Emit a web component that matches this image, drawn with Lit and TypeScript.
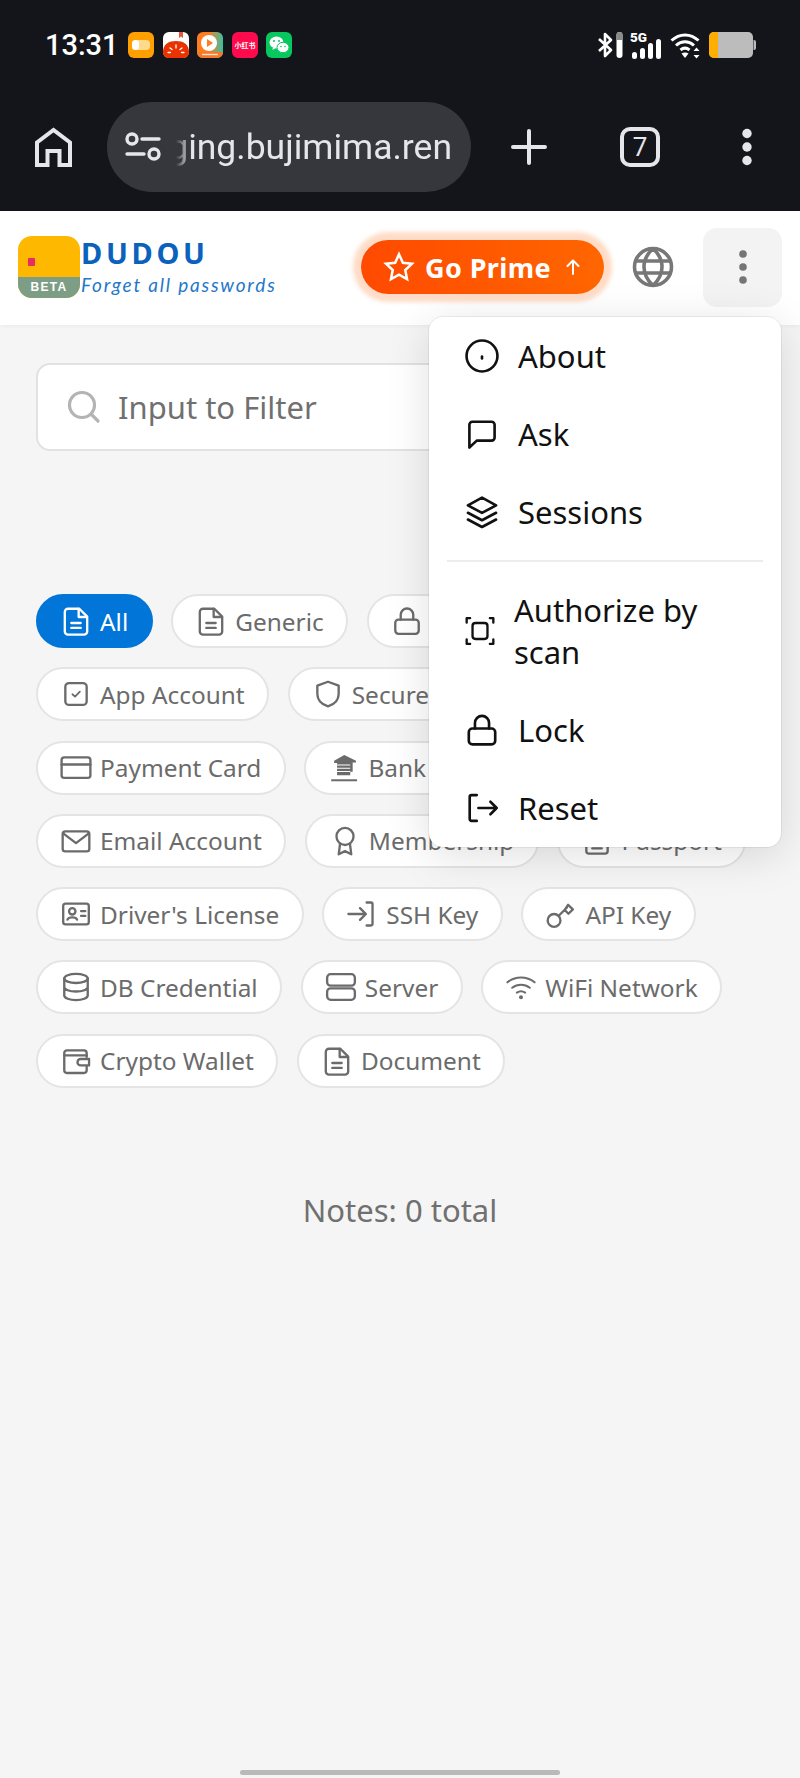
import { LitElement, html, css, svg } from 'lit';
import { customElement } from 'lit/decorators.js';

const stroke = (body: unknown, cls = 'ic') => html`<svg class=${cls} viewBox="0 0 24 24" fill="none" stroke="currentColor" stroke-width="1.75" stroke-linecap="round" stroke-linejoin="round">${body}</svg>`;

const icons: Record<string, unknown> = {
  doc: svg`<path d="M14.5 2.8H6a2.4 2.4 0 0 0-2.4 2.4v14.6A2.4 2.4 0 0 0 6 22.200h12a2.400 2.400 0 0 0 2.400-2.400V8.700z"/><path d="M14 3v6h6"/><path d="M8.500 13.500h7M8.500 17.200h7"/>`,
  lock: svg`<rect x="3.200" y="11" width="17.600" height="10.600" rx="2.400"/><path d="M7.300 11V7.300a4.700 4.700 0 0 1 9.400 0V11"/>`,
  app: svg`<rect x="4" y="3.800" width="16" height="16.400" rx="2.800"/><path stroke-width="1.300" d="M9.300 12.200l2 1.800 3.600-3.800"/>`,
  shield: svg`<path d="M12 2.800l8 2.900v6.100c0 4.700-3.300 8-8 9.400-4.700-1.400-8-4.700-8-9.400V5.700z"/>`,
  card: svg`<rect x="1.200" y="4" width="21.600" height="15.400" rx="2"/><path d="M1.200 9.400h21.600"/>`,
  bank: svg`<path fill="currentColor" stroke="none" d="M12.200 2.200L21 6.600v1.300h-2.500v7h-1.800v2.600H6.800V8.200H4.600V6.600z"/><path stroke="#fff" stroke-width="0.800" stroke-linecap="butt" d="M6.800 9.800h9.900M6.800 12.200h9.900M6.800 14.600h9.900"/><path stroke-width="1.500" stroke-linecap="butt" d="M2.400 21.200h19.400"/>`,
  mail: svg`<rect x="2" y="4.800" width="20" height="15" rx="2"/><path d="M2.400 6.300L12 13.600l9.600-7.300"/>`,
  award: svg`<circle cx="12" cy="8.600" r="6.400"/><path d="M8.300 14l-1 8 4.700-2.400 4.700 2.400-1-8"/>`,
  passport: svg`<rect x="4" y="2.500" width="16" height="19" rx="2"/><path d="M8.500 17.500h7"/>`,
  id: svg`<rect x="2.400" y="4.200" width="19.200" height="15.600" rx="1.800"/><circle cx="9.200" cy="10" r="2.400"/><path d="M5.600 16.200c.8-2.200 6.400-2.200 7.200 0M15.800 9.800h3.200M15.800 13.400h3.200"/>`,
  login: svg`<path d="M15.500 3.400h3.200a1.200 1.200 0 0 1 1.200 1.200v14.800a1.200 1.200 0 0 1-1.200 1.200h-3.200"/><path d="M1.800 12h13M10.500 7.600l4.400 4.400-4.400 4.400"/>`,
  key: svg`<circle cx="6.800" cy="16.800" r="4.800"/><path d="M10.300 13.300l6.200-6.200M14.800 9l2.800 2.800 3.300-3.300-3.600-3.400z"/>`,
  db: svg`<ellipse cx="12" cy="5.600" rx="8.800" ry="3.400"/><path d="M3.200 5.600v12.800c0 1.900 3.900 3.400 8.800 3.400s8.800-1.500 8.800-3.400V5.600M3.200 12c0 1.900 3.900 3.400 8.800 3.400s8.800-1.500 8.800-3.400"/>`,
  server: svg`<rect x="1.600" y="2.400" width="20.800" height="8.600" rx="2.600"/><rect x="1.600" y="13" width="20.800" height="8.600" rx="2.600"/>`,
  wifi: svg`<path stroke-width="1.500" d="M1.800 8.500c6-4.800 14.400-4.800 20.400 0M5.400 12.600c3.900-3 9.300-3 13.200 0M8.900 16.200c1.900-1.300 4.300-1.300 6.200 0"/><circle cx="12" cy="19.600" r="1.500" fill="currentColor" stroke="none"/>`,
  wallet: svg`<path d="M20 9V6a2 2 0 0 0-2-2H5.200a2 2 0 0 0-2 2v13a2 2 0 0 0 2 2H18a2 2 0 0 0 2-2v-3"/><path d="M3.400 7.800H20"/><path d="M15.500 10.500h6.300v4.800h-6.300a2.400 2.400 0 0 1 0-4.800z"/>`,
  info: svg`<circle cx="12" cy="12" r="10.300"/><path d="M12 12.300v1.300"/>`,
  chat: svg`<path d="M3.600 21V5.800a2 2 0 0 1 2-2h12.800a2 2 0 0 1 2 2v8.600a2 2 0 0 1-2 2H8.500z"/>`,
  layers: svg`<path d="M12 2.400L2.600 7.600l9.400 5 9.400-5z"/><path d="M2.600 12.500l9.400 5 9.400-5M2.600 17l9.400 5 9.400-5"/>`,
  scan: svg`<path d="M2 5.600V2.400h2.600M19.400 2.400H22v3.200M22 18.400v3.200h-2.600M4.600 21.600H2v-3.200"/><rect x="6.400" y="6" width="11.200" height="12" rx="2.200"/>`,
  reset: svg`<path d="M8.500 3.400H5a1.200 1.200 0 0 0-1.200 1.200v14.800A1.200 1.200 0 0 0 5 20.600h3.500"/><path d="M9.600 12h12.200M17.600 7.800l4.200 4.200-4.200 4.200"/>`,
};

const CHIPS = [
  { label: 'All', icon: 'doc', active: true },
  { label: 'Generic', icon: 'doc' },
  { label: 'Password', icon: 'lock' },
  { label: 'App Account', icon: 'app' },
  { label: 'Secure Note', icon: 'shield' },
  { label: 'Payment Card', icon: 'card' },
  { label: 'Bank Account', icon: 'bank' },
  { label: 'Email Account', icon: 'mail' },
  { label: 'Membership', icon: 'award' },
  { label: 'Passport', icon: 'passport' },
  { label: "Driver's License", icon: 'id' },
  { label: 'SSH Key', icon: 'login' },
  { label: 'API Key', icon: 'key' },
  { label: 'DB Credential', icon: 'db' },
  { label: 'Server', icon: 'server' },
  { label: 'WiFi Network', icon: 'wifi' },
  { label: 'Crypto Wallet', icon: 'wallet' },
  { label: 'Document', icon: 'doc' },
];

// notification icons in the status bar
const batteryApp = html`<svg class="app" viewBox="0 0 26 26"><rect width="26" height="26" rx="6" fill="#ff9f00"/><rect x="4" y="8" width="18" height="10" rx="4" fill="#ffd98c"/><rect x="4" y="8" width="7" height="10" rx="3.500" fill="#fff"/></svg>`;
const tomatoApp = html`<svg class="app" viewBox="0 0 26 26"><rect width="26" height="26" rx="6" fill="#fff"/><path d="M0 20C0 12 6 9 13 9s13 3 13 11c0 3.500-2.500 6-6 6H6c-3.500 0-6-2.500-6-6z" fill="#e93200"/><path d="M16 0h4v6l-2-1.500L16 6z" fill="#e8553c"/><path d="M13 13v3M7 16l2 1.500M19 16l-2 1.500M5 20.500h2.500M18.500 20.500H21" stroke="#fff" stroke-width="1.300" stroke-linecap="round"/></svg>`;
const videoApp = html`<svg class="app" viewBox="0 0 26 26"><defs><linearGradient id="va" x1="0" y1="0" x2="1" y2="0"><stop offset="0.450" stop-color="#ff7d1f"/><stop offset="1" stop-color="#36c2a4"/></linearGradient></defs><rect width="26" height="26" rx="6" fill="url(#va)"/><path d="M0 20h26v0c0 3.500-2.500 6-6 6H6c-3.500 0-6-2.500-6-6z" fill="#f4792e"/><circle cx="12" cy="11" r="8" fill="#fff"/><path d="M10 7l6 4-6 4z" fill="#ff7d1f"/><path d="M5 22.500h16" stroke="#ffe2c4" stroke-width="1.400"/></svg>`;
const redApp = html`<svg class="app" viewBox="0 0 26 26"><rect width="26" height="26" rx="6" fill="#ff0a4c"/><text x="13" y="16" text-anchor="middle" font-size="7" font-weight="700" fill="#fff" font-family="'Noto Sans CJK SC', sans-serif">小红书</text></svg>`;
const chatApp = html`<svg class="app" viewBox="0 0 26 26"><rect width="26" height="26" rx="6" fill="#07c75f"/><ellipse cx="10.500" cy="10.500" rx="7" ry="6" fill="#fff"/><path d="M7 15l-.6 3 3-1.800z" fill="#fff"/><ellipse cx="17" cy="15.500" rx="6" ry="5.200" fill="#fff" stroke="#07c75f" stroke-width="1"/><circle cx="8" cy="9" r="1" fill="#07c75f"/><circle cx="13" cy="9" r="1" fill="#07c75f"/><circle cx="15" cy="14.500" r=".8" fill="#07c75f"/><circle cx="19" cy="14.500" r=".8" fill="#07c75f"/></svg>`;

@customElement('app-root')
export class AppRoot extends LitElement {
  static styles = css`
    :host {
      display: flex;
      flex-direction: column;
      min-height: 1778px;
      background: #f5f5f5;
      font-family: 'Noto Sans', sans-serif;
      position: relative;
    }

    .top {
      background: #14151a;
      height: 211px;
      color: #e6e6ea;
      font-family: Roboto, sans-serif;
    }

    .status {
      height: 89px;
      display: flex;
      align-items: center;
      padding: 0 44px 0 45px;
      box-sizing: border-box;
    }
    .time {
      color: #fff;
      font-size: 29px;
      font-weight: 500;
      width: 83px;
    }
    .apps {
      display: flex;
      gap: 8.5px;
    }
    .app {
      width: 26px;
      height: 26px;
      display: block;
    }
    .sys {
      margin-left: auto;
      display: flex;
      align-items: center;
    }
    .sys svg {
      display: block;
      height: 28px;
      overflow: visible;
    }

    .toolbar {
      display: flex;
      align-items: center;
      padding: 13px 0 0 35px;
    }
    .toolbar svg {
      display: block;
      flex: none;
    }
    .home {
      width: 37px;
      height: 40px;
      margin-right: 35px;
    }
    .pill {
      width: 364px;
      height: 90px;
      flex: none;
      border-radius: 45px;
      background: #36373c;
      display: flex;
      align-items: center;
      box-sizing: border-box;
      padding: 0 19px 0 18px;
    }
    .tune {
      width: 36px;
      height: 30px;
      flex: none;
      display: block;
    }
    .url {
      margin-left: auto;
      font-size: 35.500px;
      white-space: nowrap;
      -webkit-mask-image: linear-gradient(90deg, transparent 8px, rgba(0, 0, 0, 0.5) 15px, #000 24px);
      mask-image: linear-gradient(90deg, transparent 8px, rgba(0, 0, 0, 0.5) 15px, #000 24px);
    }
    .plus {
      width: 36px;
      height: 36px;
      margin-left: 40px;
    }
    .tabs {
      width: 32px;
      height: 32px;
      margin-left: 73px;
      border: 4px solid #e6e6ea;
      border-radius: 10px;
      display: flex;
      align-items: center;
      justify-content: center;
      font-size: 26px;
      flex: none;
    }
    .dots {
      width: 20px;
      height: 40px;
      margin-left: 77px;
    }

    header {
      height: 114px;
      box-sizing: border-box;
      background: #fff;
      display: flex;
      align-items: center;
      padding: 0 18px 2px;
      box-shadow: 0 1px 4px rgba(0, 0, 0, 0.05);
    }
    .logo {
      width: 62px;
      height: 62px;
      border-radius: 14px;
      overflow: hidden;
      background: #ffb800;
      display: flex;
      flex-direction: column;
      flex: none;
    }
    .logo-top {
      flex: 1;
      display: flex;
      align-items: flex-end;
      padding: 0 0 11px 10px;
    }
    .logo-dot {
      width: 7px;
      height: 8px;
      background: #ea2a63;
      border-radius: 1px;
    }
    .beta {
      height: 21px;
      background: #7d9e84;
      color: #fff;
      font-family: 'Liberation Sans', sans-serif;
      font-size: 12px;
      font-weight: 700;
      letter-spacing: 1.300px;
      line-height: 21px;
      text-align: center;
    }
    .brand {
      margin-left: 1px;
      display: flex;
      flex-direction: column;
    }
    .brand b {
      color: #0b62bd;
      font-size: 29px;
      line-height: 32px;
      letter-spacing: 3.700px;
      margin-bottom: 4px;
    }
    .brand i {
      color: #1f78c9;
      font-family: Lato, sans-serif;
      font-style: italic;
      font-size: 19px;
      line-height: 24px;
      letter-spacing: 1.800px;
      white-space: nowrap;
    }
    .prime {
      margin-left: auto;
      width: 243px;
      height: 54px;
      border-radius: 27px;
      background: linear-gradient(90deg, #ff4a00, #ff6600);
      box-shadow: 0 0 4px 8px rgba(255, 110, 20, 0.24);
      color: #fff;
      display: flex;
      align-items: center;
      box-sizing: border-box;
      padding-left: 22px;
      font-size: 27px;
      font-weight: 700;
      letter-spacing: 0.400px;
    }
    .prime svg {
      flex: none;
      display: block;
    }
    .star {
      width: 32px;
      height: 32px;
      margin-right: 10px;
    }
    .up {
      width: 18px;
      height: 18px;
      margin-left: 13px;
    }
    .globe {
      width: 42px;
      height: 42px;
      margin-left: 28px;
      color: #777;
      flex: none;
    }
    .more {
      width: 79px;
      height: 79px;
      margin-left: 29px;
      border-radius: 14px;
      background: #f3f3f3;
      display: flex;
      align-items: center;
      justify-content: center;
      flex: none;
    }
    .more svg {
      width: 10px;
      height: 34px;
      display: block;
    }

    main {
      flex: 1;
      padding: 38px 36px 0;
    }
    .search {
      height: 88px;
      box-sizing: border-box;
      border: 2px solid #e2e2e2;
      border-radius: 14px;
      background: #fff;
      display: flex;
      align-items: center;
      padding-left: 29px;
      font-size: 31px;
      color: #707070;
    }
    .search svg {
      width: 34px;
      height: 34px;
      margin-right: 17px;
      color: #b4b4b4;
      flex: none;
    }
    .chips {
      margin-top: 143px;
      display: flex;
      flex-wrap: wrap;
      gap: 19.300px 18.600px;
    }
    .chip {
      height: 54px;
      box-sizing: border-box;
      display: flex;
      align-items: center;
      gap: 8px;
      padding: 0 22.500px 0 22px;
      border: 2px solid #e4e4e4;
      border-radius: 27px;
      background: #fff;
      color: #6b6b6b;
      font-size: 24.400px;
      white-space: nowrap;
    }
    .chip.active {
      background: #0275d8;
      border-color: #0275d8;
      color: #fff;
    }
    .ic {
      width: 32px;
      height: 32px;
      flex: none;
      display: block;
    }
    .total {
      margin-top: 102px;
      text-align: center;
      font-size: 31px;
      line-height: 41px;
      color: #707070;
    }

    .menu {
      position: absolute;
      left: 429px;
      top: 317px;
      width: 352px;
      box-sizing: border-box;
      background: #fff;
      border-radius: 14px;
      box-shadow: 0 0 0 1px rgba(0, 0, 0, 0.06), 0 8px 44px rgba(0, 0, 0, 0.13);
      color: #111;
      font-size: 31px;
      line-height: 42px;
    }
    .item {
      display: flex;
      align-items: center;
      gap: 18px;
      padding: 18px 40px 18px 35px;
    }
    .item .ic {
      width: 36px;
      height: 36px;
    }
    .item.narrow .ic {
      width: 32px;
      height: 32px;
    }
    .menu hr {
      border: 0;
      height: 2px;
      margin: 9px 18px;
      background: #ececec;
    }

    .gesture {
      height: 8px;
      display: flex;
      justify-content: center;
    }
    .gesture span {
      width: 320px;
      height: 5px;
      border-radius: 3px;
      background: #b9b9b9;
    }
  `;

  render() {
    return html`
      <div class="top">
        <div class="status">
          <div class="time">13:31</div>
          <div class="apps">${batteryApp}${tomatoApp}${videoApp}${redApp}${chatApp}</div>
          <div class="sys">
            <svg viewBox="0 0 26 28" style="width:26px">
              <path d="M2 8l12 11-6 6V3l6 6L2 20" fill="none" stroke="#fff" stroke-width="2.600" stroke-linejoin="round"/>
              <rect x="19.500" y="1" width="6" height="26" rx="3" fill="#fff"/>
              <path d="M19.500 9V4a3 3 0 0 1 6 0v5z" fill="#8a8a8a"/>
            </svg>
            <svg viewBox="0 0 33 28" style="width:33px;margin-left:7px">
              <text x="0" y="10.500" font-size="13.500" font-weight="900" fill="#fff" font-family="Roboto, sans-serif">5G</text>
              <rect x="2" y="21" width="5" height="7" rx="2.500" fill="#fff"/>
              <rect x="10" y="17" width="5" height="11" rx="2.500" fill="#fff"/>
              <rect x="18" y="12" width="5" height="16" rx="2.500" fill="#fff"/>
              <rect x="26" y="8" width="5" height="20" rx="2.500" fill="#fff"/>
            </svg>
            <svg viewBox="0 0 33 28" style="width:33px;margin-left:7px">
              <path d="M1.500 9.500c8-7.500 19-7.500 27 0M6 14.500c5.500-5 12.500-5 18 0M10.500 19c3-2.500 6-2.500 9 0" fill="none" stroke="#fff" stroke-width="3"/>
              <path d="M11.500 22.500c2-1.300 5-1.300 7 0L15 27z" fill="#fff"/>
              <path d="M26.500 16.500l3 3.500h-6zM26.500 27.500l-3-3.500h6z" fill="#fff"/>
            </svg>
            <svg viewBox="0 0 47 28" style="width:47px;margin-left:6px">
              <rect x="0" y="1" width="44" height="26" rx="5" fill="#bcbcbc"/>
              <path d="M5 1h4v26H5a5 5 0 0 1-5-5V6a5 5 0 0 1 5-5z" fill="#ffae00"/>
              <path d="M44.500 9h.5a2 2 0 0 1 2 2v6a2 2 0 0 1-2 2h-.5z" fill="#bcbcbc"/>
            </svg>
          </div>
        </div>
        <div class="toolbar">
          <svg class="home" viewBox="0 0 37 40" fill="none" stroke="#e6e6ea" stroke-width="4">
            <path d="M2 38V15.500L18.500 3 35 15.500V38H24.500V24H12.500V38z" stroke-linejoin="miter"/>
          </svg>
          <div class="pill">
            <svg class="tune" viewBox="0 0 36 30" fill="none" stroke="#e6e6ea" stroke-width="3.400" stroke-linecap="round">
              <circle cx="7" cy="7" r="5"/><path d="M17 7h17M2 22h17"/><circle cx="29" cy="22" r="5"/>
            </svg>
            <div class="url">ging.bujimima.ren</div>
          </div>
          <svg class="plus" viewBox="0 0 36 36" stroke="#e6e6ea" stroke-width="4" stroke-linecap="round">
            <path d="M18 2v32M2 18h32"/>
          </svg>
          <div class="tabs">7</div>
          <svg class="dots" viewBox="0 0 20 40" fill="#e6e6ea">
            <circle cx="10" cy="6.500" r="4.700"/><circle cx="10" cy="20" r="4.700"/><circle cx="10" cy="33.500" r="4.700"/>
          </svg>
        </div>
      </div>

      <header>
        <div class="logo">
          <div class="logo-top"><span class="logo-dot"></span></div>
          <div class="beta">BETA</div>
        </div>
        <div class="brand">
          <b>DUDOU</b>
          <i>Forget all passwords</i>
        </div>
        <div class="prime">
          <svg class="star" viewBox="0 0 24 24" fill="none" stroke="#fff" stroke-width="1.900" stroke-linejoin="miter">
            <path d="M12 2.500l2.900 6.300 6.800.8-5 4.700 1.300 6.800L12 17.700l-6 3.400 1.300-6.800-5-4.700 6.800-.8z"/>
          </svg>
          Go Prime
          <svg class="up" viewBox="0 0 18 18" fill="none" stroke="#fff" stroke-width="2" stroke-linecap="round" stroke-linejoin="round">
            <path d="M9 16V2.500M3.500 8L9 2.500 14.500 8"/>
          </svg>
        </div>
        <svg class="globe" viewBox="0 0 42 42" fill="none" stroke="currentColor" stroke-width="3.600">
          <circle cx="21" cy="21" r="18.500"/>
          <path d="M21 2.500c-12 11-12 26 0 37M21 2.500c12 11 12 26 0 37M3.500 15h35M3.500 27h35"/>
        </svg>
        <div class="more">
          <svg viewBox="0 0 10 34" fill="#757575"><circle cx="5" cy="4" r="3.800"/><circle cx="5" cy="17" r="3.800"/><circle cx="5" cy="30" r="3.800"/></svg>
        </div>
      </header>

      <main>
        <div class="search">
          <svg viewBox="0 0 34 34" fill="none" stroke="currentColor" stroke-width="3.200" stroke-linecap="round">
            <circle cx="15" cy="15" r="12.500"/><path d="M24.500 24.500l6.500 6.500"/>
          </svg>
          Input to Filter
        </div>
        <div class="chips">
          ${CHIPS.map(
            (c) => html`<div class="chip ${c.active ? 'active' : ''}">${stroke(icons[c.icon])}${c.label}</div>`,
          )}
        </div>
        <div class="total">Notes: 0 total</div>
      </main>

      <div class="gesture"><span></span></div>

      <div class="menu">
        <div class="item">${stroke(icons.info)}About</div>
        <div class="item">${stroke(icons.chat)}Ask</div>
        <div class="item">${stroke(icons.layers)}Sessions</div>
        <hr />
        <div class="item narrow">${stroke(icons.scan)}<span>Authorize by scan</span></div>
        <div class="item">${stroke(icons.lock)}Lock</div>
        <div class="item">${stroke(icons.reset)}Reset</div>
      </div>
    `;
  }
}
